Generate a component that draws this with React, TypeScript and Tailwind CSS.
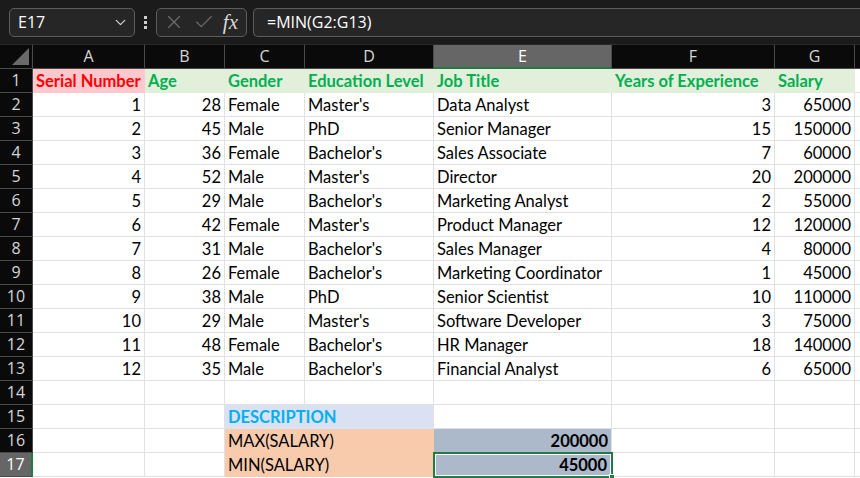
import { ChevronDown, X, Check } from 'lucide-react';

const cols = ['A', 'B', 'C', 'D', 'E', 'F', 'G', ''];

const rows: [number, number, string, string, string, number, number][] = [
  [1, 28, 'Female', "Master's", 'Data Analyst', 3, 65000],
  [2, 45, 'Male', 'PhD', 'Senior Manager', 15, 150000],
  [3, 36, 'Female', "Bachelor's", 'Sales Associate', 7, 60000],
  [4, 52, 'Male', "Master's", 'Director', 20, 200000],
  [5, 29, 'Male', "Bachelor's", 'Marketing Analyst', 2, 55000],
  [6, 42, 'Female', "Master's", 'Product Manager', 12, 120000],
  [7, 31, 'Male', "Bachelor's", 'Sales Manager', 4, 80000],
  [8, 26, 'Female', "Bachelor's", 'Marketing Coordinator', 1, 45000],
  [9, 38, 'Male', 'PhD', 'Senior Scientist', 10, 110000],
  [10, 29, 'Male', "Master's", 'Software Developer', 3, 75000],
  [11, 48, 'Female', "Bachelor's", 'HR Manager', 18, 140000],
  [12, 35, 'Male', "Bachelor's", 'Financial Analyst', 6, 65000],
];

const headers = ['Serial Number', 'Age', 'Gender', 'Education Level', 'Job Title', 'Years of Experience', 'Salary'];

const cell = 'h-[24px] border-r border-b border-[#e1e1e1] px-[3px] leading-[25px] whitespace-nowrap';
const rowHead = 'h-[24px] border-r border-b border-[#4a4a4a] bg-[#0a0a0a] text-[#d6d6d6] text-[16px] leading-[23px] text-center font-["Open_Sans",sans-serif]';

function Cell({ v, right, cls = '' }: { v?: string | number; right?: boolean; cls?: string }) {
  return <div className={`${cell} ${right ? 'text-right' : 'text-left'} ${cls}`}>{v ?? ''}</div>;
}

export default function App() {
  return (
    <div className="w-[860px] h-[478px] overflow-hidden bg-white font-['Lato',sans-serif] text-[16.5px] text-black">
      {/* formula bar */}
      <div className="h-[45px] bg-[#1b1b1b] flex items-center pl-[9px] gap-[6px] border-b border-[#2a2a2a]">
        <div className="w-[126px] h-[29px] rounded-[5px] border border-[#5c5c5c] bg-[#262626] flex items-center justify-between pl-[8px] pr-[5px] text-white text-[16px] font-['Open_Sans',sans-serif]">
          <span>E17</span>
          <ChevronDown size={17} strokeWidth={1.8} className="text-[#cfcfcf]" />
        </div>
        <div className="flex flex-col gap-[2px] mx-[3px]">
          <span className="block w-[3px] h-[3px] bg-[#cfcfcf]" />
          <span className="block w-[3px] h-[3px] bg-[#cfcfcf]" />
          <span className="block w-[3px] h-[3px] bg-[#cfcfcf]" />
        </div>
        <div className="w-[91px] h-[29px] rounded-[5px] border border-[#5c5c5c] bg-[#262626] flex items-center justify-between pl-[6px] pr-[8px]">
          <X size={22} strokeWidth={1.2} className="text-[#6f6f6f]" />
          <Check size={22} strokeWidth={1.2} className="text-[#6f6f6f]" />
          <span className="text-[#d8d8d8] italic text-[21px] font-['Liberation_Serif',serif] leading-none">fx</span>
        </div>
        <div className="flex-1 h-[29px] rounded-l-[5px] border border-r-0 border-[#5c5c5c] bg-[#262626] flex items-center pl-[13px] text-white text-[16px] font-['Open_Sans',sans-serif]">
          =MIN(G2:G13)
        </div>
      </div>

      <div className="grid grid-cols-[33px_112px_80px_80px_129px_178px_163px_80px_1fr]">
        {/* column headers */}
        <div className="h-[24px] bg-[#0a0a0a] border-r border-b border-[#4a4a4a] flex items-end justify-end p-[3px]">
          <div className="w-0 h-0 border-l-[17px] border-l-transparent border-b-[17px] border-b-[#6a6a6a]" />
        </div>
        {cols.map((c, i) =>
          c === 'E' ? (
            <div key={i} className="h-[24px] bg-[#666666] border-r border-[#4a4a4a] border-b-2 border-b-[#1f7a45] text-white text-[16px] leading-[23px] text-center font-['Open_Sans',sans-serif]">
              {c}
            </div>
          ) : (
            <div key={i} className="h-[24px] bg-[#0a0a0a] border-r border-b border-[#4a4a4a] text-[#d6d6d6] text-[16px] leading-[23px] text-center font-['Open_Sans',sans-serif]">
              {c}
            </div>
          )
        )}

        {/* row 1 */}
        <div className={rowHead}>1</div>
        <Cell v={headers[0]} cls="bg-[#ffc7ce] border-[#ffc7ce] text-[#ff0000] font-bold" />
        {headers.slice(1).map((h) => (
          <Cell key={h} v={h} cls="bg-[#e2efda] border-[#e2efda] text-[#00b050] font-bold" />
        ))}
        <Cell />

        {rows.map((r, i) => (
          <div key={i} className="contents">
            <div className={rowHead}>{i + 2}</div>
            <Cell v={r[0]} right />
            <Cell v={r[1]} right />
            <Cell v={r[2]} />
            <Cell v={r[3]} />
            <Cell v={r[4]} />
            <Cell v={r[5]} right />
            <Cell v={r[6]} right />
            <Cell />
          </div>
        ))}

        {/* row 14 */}
        <div className={rowHead}>14</div>
        {cols.map((_, i) => (
          <Cell key={i} />
        ))}

        {/* row 15 */}
        <div className={rowHead}>15</div>
        <Cell />
        <Cell />
        <Cell v="DESCRIPTION" cls="bg-[#d9e1f2] border-[#d9e1f2] text-[#00b0f0] font-bold overflow-visible relative z-10" />
        <Cell cls="bg-[#d9e1f2] border-b-[#d9e1f2] border-r-[#e1e1e1]" />
        <Cell />
        <Cell />
        <Cell />
        <Cell />

        {/* row 16 */}
        <div className={rowHead}>16</div>
        <Cell />
        <Cell />
        <Cell v="MAX(SALARY)" cls="bg-[#f8cbad] border-[#f8cbad] overflow-visible relative z-10" />
        <Cell cls="bg-[#f8cbad] border-[#f8cbad]" />
        <Cell v={200000} right cls="bg-[#acb9ca] border-[#acb9ca] font-bold" />
        <Cell />
        <Cell />
        <Cell />

        {/* row 17 */}
        <div className="h-[24px] border-b border-[#4a4a4a] border-r-2 border-r-[#1f7a45] bg-[#666666] text-white text-[16px] leading-[23px] text-center font-['Open_Sans',sans-serif]">17</div>
        <Cell />
        <Cell />
        <Cell v="MIN(SALARY)" cls="bg-[#f8cbad] border-[#f8cbad] overflow-visible relative z-10" />
        <Cell cls="bg-[#f8cbad] border-[#f8cbad]" />
        <div className="relative h-[24px] bg-[#acb9ca] pl-[3px] pr-[5px] leading-[25px] text-right font-bold">
          45000
          <div className="absolute -left-px -top-px -right-px -bottom-px border-2 border-[#1f7a45]">
            <div className="w-full h-full border border-white" />
          </div>
          <div className="absolute -right-[3px] -bottom-[3px] w-[6px] h-[6px] bg-[#1f7a45] border border-white" />
        </div>
        <Cell />
        <Cell />
        <Cell />
      </div>
    </div>
  );
}
